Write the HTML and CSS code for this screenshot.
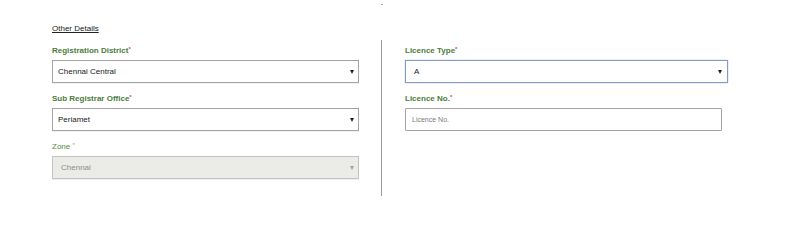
FILE: index.html
```html
<!DOCTYPE html>
<html>
<head>
<meta charset="utf-8">
<link rel="stylesheet" href="styles.css">
</head>
<body>
<div class="page">
  <div class="dot"></div>
  <div class="heading">Other Details</div>
  <div class="row">
    <div class="col col-left">
      <div class="field">
        <div class="label">Registration District<span class="req">*</span></div>
        <div class="select"><span class="value">Chennai Central</span><span class="arrow"></span></div>
      </div>
      <div class="field">
        <div class="label">Sub Registrar Office<span class="req">*</span></div>
        <div class="select"><span class="value">Periamet</span><span class="arrow"></span></div>
      </div>
      <div class="field">
        <div class="label label-light">Zone <span class="req req-light">*</span></div>
        <div class="select select-disabled"><span class="value">Chennai</span><span class="arrow"></span></div>
      </div>
    </div>
    <div class="divider"></div>
    <div class="col col-right">
      <div class="field">
        <div class="label">Licence Type<span class="req">*</span></div>
        <div class="select select-focus"><span class="value">A</span><span class="arrow"></span></div>
      </div>
      <div class="field">
        <div class="label">Licence No.<span class="req">*</span></div>
        <input class="text-input" type="text" placeholder="Licence No.">
      </div>
    </div>
  </div>
</div>
</body>
</html>
```
FILE: styles.css
```css
html, body {
  margin: 0;
  padding: 0;
  background: #ffffff;
}
body {
  font-family: "Liberation Sans", Arial, sans-serif;
  color: #222;
}
.page {
  padding-left: 52px;
}
.dot {
  width: 2px;
  height: 1px;
  margin: 4px 0 0 329px;
  background: #b5b5b5;
}
.heading {
  margin-top: 18px;
  font-size: 8px;
  line-height: 12px;
  color: #222;
  text-decoration: underline;
}
.row {
  display: flex;
  margin-top: 5px;
}
.col {
  padding-top: 5px;
}
.col-left {
  width: 307px;
}
.col-right {
  width: 323px;
}
.divider {
  width: 1px;
  height: 156px;
  background: #9a9a9a;
  margin-left: 22px;
  margin-right: 23px;
}
.field + .field {
  margin-top: 10px;
}
.label {
  font-size: 8px;
  line-height: 12px;
  font-weight: bold;
  color: #4a7d3a;
  margin-bottom: 3px;
}
.label-light {
  font-weight: normal;
  color: #4f8d3e;
}
.req {
  color: #d9473f;
  font-size: 6px;
  vertical-align: top;
  line-height: 8px;
}
.req-light {
  color: #d98a85;
}
.select {
  box-sizing: border-box;
  height: 23px;
  border: 1px solid #a4a4a4;
  box-shadow: 0 1px 0 rgba(0,0,0,0.06);
  display: flex;
  align-items: center;
  padding: 0 4px 0 5px;
  font-size: 8px;
  color: #222;
  background: #fff;
}
.value {
  flex: 1;
}
.arrow {
  width: 0;
  height: 0;
  border-left: 2px solid transparent;
  border-right: 2px solid transparent;
  border-top: 4px solid #222;
}
.select-disabled {
  background: #ebebe7;
  border-color: #c3c3c3;
  color: #8d8d8d;
  padding-left: 8px;
}
.select-disabled .arrow {
  border-top-color: #a0a0a0;
}
.select-focus {
  border-color: #7f9bc6;
  box-shadow: 0 0 1px #8aa5cf;
  padding-left: 8px;
  padding-right: 5px;
}
.text-input {
  display: block;
  box-sizing: border-box;
  width: 317px;
  height: 23px;
  margin: 0;
  border: 1px solid #a4a4a4;
  border-radius: 1px;
  padding: 0 0 0 6px;
  font-family: "Liberation Sans", Arial, sans-serif;
  font-size: 7px;
  color: #222;
  outline: none;
  background: #fff;
}
.text-input::placeholder {
  color: #7a7a7a;
}
```
